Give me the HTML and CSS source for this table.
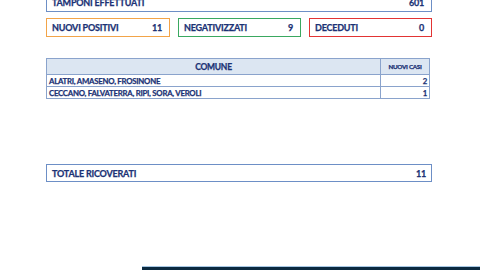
FILE: index.html
```html
<!DOCTYPE html>
<html>
<head>
<meta charset="utf-8">
<link rel="stylesheet" href="styles.css">
</head>
<body>
<div class="page">
  <div class="box box-blue top">
    <span>TAMPONI EFFETTUATI</span><span>601</span>
  </div>
  <div class="stats">
    <div class="box box-orange"><span>NUOVI POSITIVI</span><span>11</span></div>
    <div class="box box-green"><span>NEGATIVIZZATI</span><span>9</span></div>
    <div class="box box-red"><span>DECEDUTI</span><span>0</span></div>
  </div>
  <table class="cases">
    <thead>
      <tr><th class="c-name">COMUNE</th><th class="c-num">NUOVI CASI</th></tr>
    </thead>
    <tbody>
      <tr><td class="c-name">ALATRI, AMASENO, FROSINONE</td><td class="c-num">2</td></tr>
      <tr><td class="c-name">CECCANO, FALVATERRA, RIPI, SORA, VEROLI</td><td class="c-num">1</td></tr>
    </tbody>
  </table>
  <div class="box box-blue total">
    <span>TOTALE RICOVERATI</span><span>11</span>
  </div>
</div>
<div class="footer"></div>
</body>
</html>
```
FILE: styles.css
```css
html, body {
  margin: 0;
  padding: 0;
  width: 480px;
  height: 270px;
  overflow: hidden;
  background: #ffffff;
  position: relative;
}
body {
  font-family: Lato, "Open Sans", "Liberation Sans", sans-serif;
  font-weight: 700;
  color: #1b3275;
  -webkit-text-stroke: 0.25px #1b3275;
}
.page {
  width: 386px;
  margin-left: 46px;
  display: flex;
  flex-direction: column;
}
.box {
  display: flex;
  justify-content: space-between;
  align-items: center;
  box-sizing: border-box;
  border: 1.5px solid #6d8fc6;
  font-size: 9px;
  letter-spacing: -0.2px;
  padding: 0 7px 0 5px;
  background: #fff;
}
.top {
  height: 20px;
  margin-top: -8px;
  padding-top: 1px;
}
.stats {
  display: grid;
  grid-template-columns: 124px 123px 123px;
  column-gap: 8px;
  margin-top: 6px;
}
.stats .box {
  height: 19px;
}
.box-orange { border-color: #f2a449; }
.box-green { border-color: #3aa860; }
.box-red { border-color: #e23434; }
.cases {
  margin-top: 21px;
  width: 384px;
  border-collapse: collapse;
  font-size: 7.8px;
  letter-spacing: -0.25px;
}
.cases th, .cases td {
  border: 1px solid #8aa3cc;
  padding: 0 2px;
  line-height: 10px;
}
.cases th {
  background: #dce6f2;
  height: 15px;
  text-align: center;
  font-size: 8.5px;
}
.cases th.c-num {
  font-size: 6.3px;
  letter-spacing: -0.3px;
}
.cases td {
  height: 11px;
}
.cases td.c-num {
  text-align: right;
}
.cases .c-num {
  width: 44px;
}
.total {
  height: 18px;
  margin-top: 65px;
  padding-right: 5px;
}
.footer {
  position: absolute;
  left: 142px;
  right: 0;
  top: 266px;
  height: 4px;
  box-sizing: border-box;
  border-top: 1px solid #a8c8e4;
  background: #0b2a40;
}
```
